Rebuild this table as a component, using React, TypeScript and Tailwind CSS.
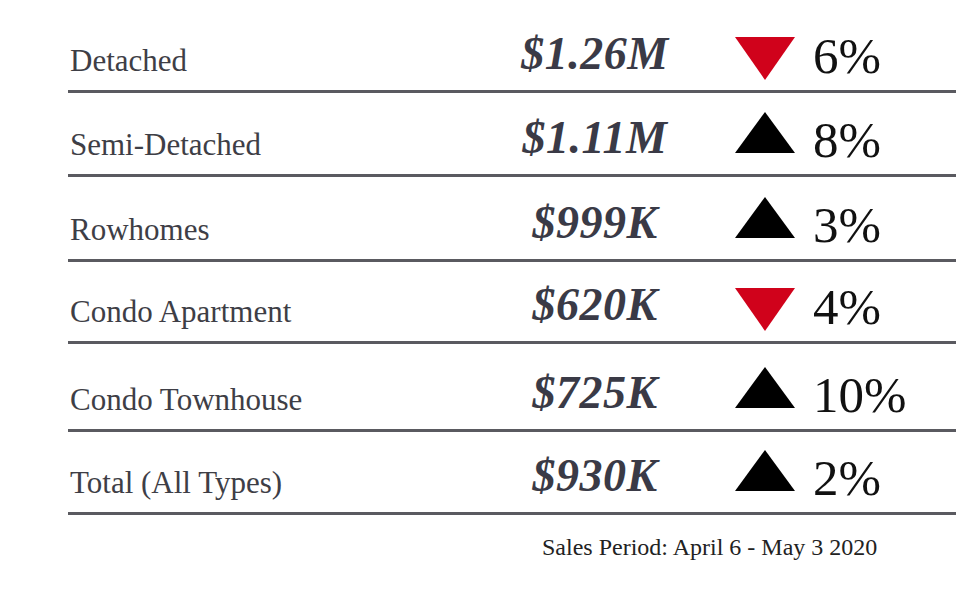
import React from 'react';

type Row = {
  label: string;
  price: string;
  pct: string;
  up: boolean;
  h: string;
};

const rows: Row[] = [
  { label: 'Detached', price: '$1.26M', pct: '6%', up: false, h: 'h-[93px]' },
  { label: 'Semi-Detached', price: '$1.11M', pct: '8%', up: true, h: 'h-[84px]' },
  { label: 'Rowhomes', price: '$999K', pct: '3%', up: true, h: 'h-[85px]' },
  { label: 'Condo Apartment', price: '$620K', pct: '4%', up: false, h: 'h-[82px]' },
  { label: 'Condo Townhouse', price: '$725K', pct: '10%', up: true, h: 'h-[88px]' },
  { label: 'Total (All Types)', price: '$930K', pct: '2%', up: true, h: 'h-[83px]' },
];

const Arrow = ({ up }: { up: boolean }) =>
  up ? (
    <svg width="60" height="41" viewBox="0 0 60 41" className="mb-[21px] shrink-0">
      <polygon points="30,0 60,41 0,41" fill="#000000" />
    </svg>
  ) : (
    <svg width="60" height="43" viewBox="0 0 60 43" className="mb-[10px] shrink-0">
      <polygon points="0,0 60,0 30,43" fill="#d0021b" />
    </svg>
  );

const App = () => {
  return (
    <div className="w-[980px] h-[590px] bg-white overflow-hidden font-['Liberation_Serif',serif]">
      <div className="ml-[68px] w-[888px]">
        {rows.map((r) => (
          <div key={r.label} className={`${r.h} flex items-end border-b-[3px] border-[#5a5a60]`}>
            {/* label */}
            <div className="w-[427px] pl-[2px] mb-[14px] text-[31px] leading-none text-[#3e3e46] whitespace-nowrap">
              {r.label}
            </div>
            {/* price */}
            <div className="w-[200px] mb-[13px] text-center text-[46px] leading-none font-bold italic tracking-[0.5px] text-[#3a3a46] whitespace-nowrap">
              {r.price}
            </div>
            <div className="ml-[40px] flex items-end">
              <Arrow up={r.up} />
            </div>
            <div className="ml-[18px] mb-[8px] text-[51px] leading-none text-[#111111] whitespace-nowrap">
              {r.pct}
            </div>
          </div>
        ))}
        <div className="mt-[20px] pl-[474px] text-[24px] leading-none text-[#222222] whitespace-nowrap">
          Sales Period: April 6 - May 3 2020
        </div>
      </div>
    </div>
  );
};

export default App;
